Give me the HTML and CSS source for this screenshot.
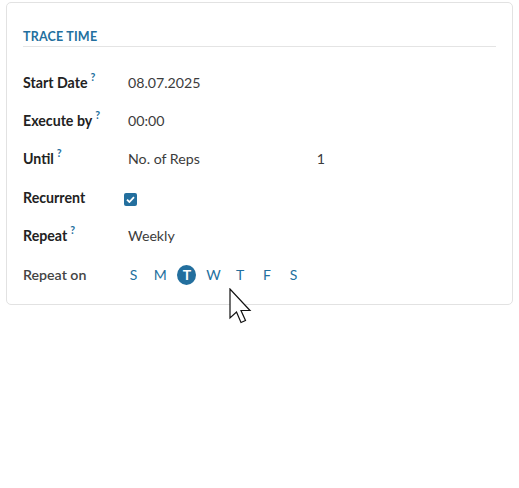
FILE: index.html
```html
<!DOCTYPE html>
<html>
<head>
<meta charset="utf-8">
<link rel="stylesheet" href="styles.css">
</head>
<body>
<div class="card">
  <div class="title">TRACE TIME</div>
  <div class="rows">
    <div class="row"><div class="label">Start Date<sup>?</sup></div><div class="value">08.07.2025</div></div>
    <div class="row"><div class="label">Execute by<sup>?</sup></div><div class="value">00:00</div></div>
    <div class="row"><div class="label">Until<sup>?</sup></div><div class="value reps"><span>No. of Reps</span><span class="num">1</span></div></div>
    <div class="row"><div class="label">Recurrent</div><div class="value"><span class="check"><svg width="9" height="7" viewBox="0 0 9 7"><path d="M1 3.6 L3.4 6 L8 1.2" fill="none" stroke="#fff" stroke-width="1.8"/></svg></span></div></div>
    <div class="row"><div class="label">Repeat<sup>?</sup></div><div class="value">Weekly</div></div>
    <div class="row"><div class="label light">Repeat on</div><div class="value days">
      <span class="day">S</span><span class="day">M</span><span class="day on">T</span><span class="day">W</span><span class="day">T</span><span class="day">F</span><span class="day">S</span>
    </div></div>
  </div>
  <svg class="cursor" width="26" height="38" viewBox="0 0 26 38"><path d="M1 1 L1 30 L7.5 24 L12 34.5 L16.5 32.5 L12 22.5 L21 22.5 Z" fill="#fff" stroke="#111" stroke-width="1.2" stroke-linejoin="miter"/></svg>
</div>
</body>
</html>
```
FILE: styles.css
```css
html, body { margin: 0; padding: 0; background: #fff; }
body { font-family: "Lato", "Open Sans", sans-serif; width: 519px; height: 488px; overflow: hidden; }
.card {
  position: relative;
  margin: 2px 6px 0 6px;
  height: 303px;
  border: 1px solid #e2e2e2;
  border-radius: 5px;
  padding: 0 16px 0 16px;
  box-sizing: border-box;
}
.title {
  margin-top: 27px;
  font-size: 12.5px;
  font-weight: 700;
  color: #236f9e;
  letter-spacing: 0.2px;
  padding-bottom: 2px;
  border-bottom: 1px solid #e4e4e4;
  line-height: 14px;
}
.rows { display: flex; flex-direction: column; margin-top: 16.5px; }
.row { display: flex; align-items: center; height: 38.4px; line-height: 18px; }
.label { width: 105px; font-size: 14.2px; font-weight: 700; color: #222; }
.label.light { font-weight: 600; color: #444; }
.label sup { font-size: 10.5px; line-height: 0; vertical-align: baseline; color: #236f9e; margin-left: 3px; position: relative; top: -7px; font-weight: 700; }
.value { font-size: 14.2px; color: #3c3c3c; }
.reps { display: flex; width: 197px; }
.reps .num { margin-left: auto; }
.check { display: inline-flex; width: 13px; height: 13px; background: #236f9e; border-radius: 2px; align-items: center; justify-content: center; margin-left: -4px; margin-top: 2px; }
.days { display: flex; margin-left: -4px; }
.day { width: 19px; height: 20px; margin-right: 7.7px; display: flex; align-items: center; justify-content: center; color: #236f9e; font-size: 14px; }
.day.on { background: #236f9e; color: #fff; border-radius: 50%; font-weight: 700; }
.cursor { position: absolute; left: 222px; top: 285px; }
```
